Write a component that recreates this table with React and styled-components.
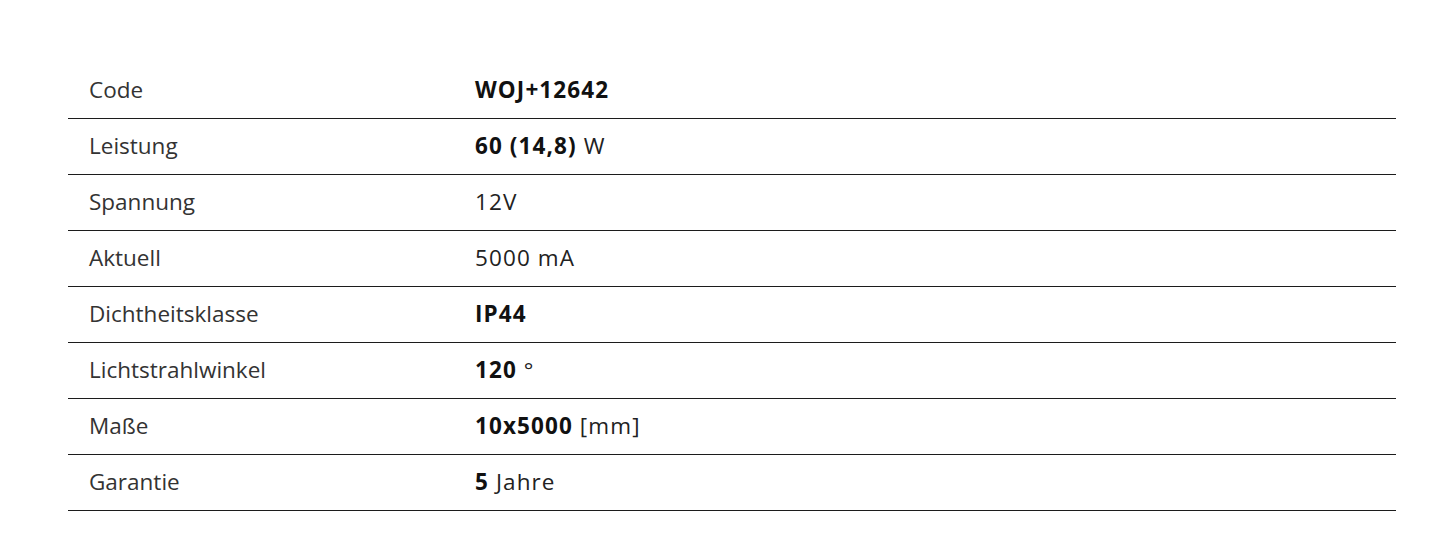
import React from 'react'
import styled, { createGlobalStyle } from 'styled-components'

const Global = createGlobalStyle`
  body {
    margin: 0;
    background: #fff;
    font-family: 'Open Sans', Lato, sans-serif;
  }
`

const Wrap = styled.div`
  padding: 63px 49px 0 68px;
`

const Table = styled.div`
  display: flex;
  flex-direction: column;
  width: 1328px;
`

const Row = styled.div`
  display: grid;
  grid-template-columns: 407px 1fr;
  align-items: center;
  height: 56px;
  box-sizing: border-box;
  padding-bottom: 2px;
  border-bottom: 1.5px solid #1c1c1c;
`

const Label = styled.div`
  padding-left: 21px;
  font-size: 22.5px;
  color: #333;
`

const Value = styled.div`
  font-size: 22.5px;
  letter-spacing: 1.1px;
  color: #222;
  b {
    font-weight: 700;
    color: #111;
  }
`

const rows = [
  ['Code', <><b>WOJ+12642</b></>],
  ['Leistung', <><b>60 (14,8)</b> W</>],
  ['Spannung', <>12V</>],
  ['Aktuell', <>5000 mA</>],
  ['Dichtheitsklasse', <><b>IP44</b></>],
  ['Lichtstrahlwinkel', <><b>120</b> °</>],
  ['Maße', <><b>10x5000</b> [mm]</>],
  ['Garantie', <><b>5</b> Jahre</>],
]

export default function App() {
  return (
    <>
      <Global />
      <Wrap>
        <Table>
          {rows.map(([label, value], i) => (
            <Row key={i}>
              <Label>{label}</Label>
              <Value>{value}</Value>
            </Row>
          ))}
        </Table>
      </Wrap>
    </>
  )
}
